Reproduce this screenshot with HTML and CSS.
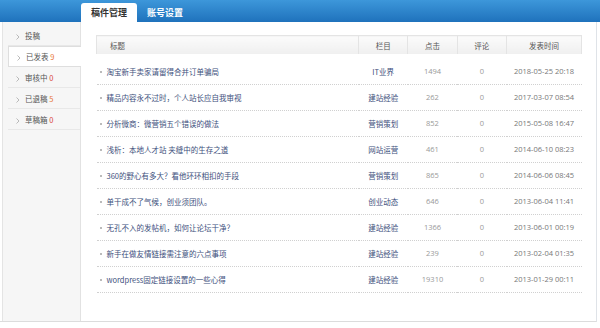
FILE: index.html
```html
<!DOCTYPE html>
<html lang="zh-CN">
<head>
  <meta charset="UTF-8">
  <title>稿件管理</title>
  <link rel="stylesheet" href="styles.css">
</head>
<body>

  <div class="topbar">
    <a class="tab active" href="#">稿件管理</a>
    <a class="tab" href="#">账号设置</a>
  </div>

  <div class="wrap">
    <ul class="side">
      <li><svg class="arr" width="4" height="6" viewBox="0 0 4 6"><path d="M0.5 0.5 L3 3 L0.5 5.5" fill="none" stroke="#aaa" stroke-width="0.8"/></svg>投稿</li>
      <li class="on"><svg class="arr" width="4" height="6" viewBox="0 0 4 6"><path d="M0.5 0.5 L3 3 L0.5 5.5" fill="none" stroke="#aaa" stroke-width="0.8"/></svg>已发表 <em>9</em></li>
      <li><svg class="arr" width="4" height="6" viewBox="0 0 4 6"><path d="M0.5 0.5 L3 3 L0.5 5.5" fill="none" stroke="#aaa" stroke-width="0.8"/></svg>审核中 <em class="red">0</em></li>
      <li><svg class="arr" width="4" height="6" viewBox="0 0 4 6"><path d="M0.5 0.5 L3 3 L0.5 5.5" fill="none" stroke="#aaa" stroke-width="0.8"/></svg>已退稿 <em>5</em></li>
      <li><svg class="arr" width="4" height="6" viewBox="0 0 4 6"><path d="M0.5 0.5 L3 3 L0.5 5.5" fill="none" stroke="#aaa" stroke-width="0.8"/></svg>草稿箱 <em class="red">0</em></li>
    </ul>

    <div class="main">
      <table class="list">
        <thead>
          <tr>
            <th class="t">标题</th>
            <th>栏目</th>
            <th>点击</th>
            <th>评论</th>
            <th class="last">发表时间</th>
          </tr>
        </thead>
        <tbody>
          <tr><td class="t"><i></i><a href="#">淘宝新手卖家请留得合并订单骗局</a></td><td class="cat">IT业界</td><td>1494</td><td>0</td><td class="d">2018-05-25 20:18</td></tr>
          <tr><td class="t"><i></i><a href="#">精品内容永不过时，个人站长应自我审视</a></td><td class="cat">建站经验</td><td>262</td><td>0</td><td class="d">2017-03-07 08:54</td></tr>
          <tr><td class="t"><i></i><a href="#">分析微商：微营销五个错误的做法</a></td><td class="cat">营销策划</td><td>852</td><td>0</td><td class="d">2015-05-08 16:47</td></tr>
          <tr><td class="t"><i></i><a href="#">浅析：本地人才站 夹缝中的生存之道</a></td><td class="cat">网站运营</td><td>461</td><td>0</td><td class="d">2014-06-10 08:23</td></tr>
          <tr><td class="t"><i></i><a href="#">360的野心有多大？看他环环相扣的手段</a></td><td class="cat">营销策划</td><td>865</td><td>0</td><td class="d">2014-06-06 08:45</td></tr>
          <tr><td class="t"><i></i><a href="#">单干成不了气候，创业须团队。</a></td><td class="cat">创业动态</td><td>646</td><td>0</td><td class="d">2013-06-04 11:41</td></tr>
          <tr><td class="t"><i></i><a href="#">无孔不入的发帖机，如何让论坛干净？</a></td><td class="cat">建站经验</td><td>1366</td><td>0</td><td class="d">2013-06-01 00:19</td></tr>
          <tr><td class="t"><i></i><a href="#">新手在做友情链接需注意的六点事项</a></td><td class="cat">建站经验</td><td>239</td><td>0</td><td class="d">2013-02-04 01:35</td></tr>
          <tr><td class="t"><i></i><a href="#">wordpress固定链接设置的一些心得</a></td><td class="cat">建站经验</td><td>19310</td><td>0</td><td class="d">2013-01-29 00:11</td></tr>
        </tbody>
      </table>
    </div>
  </div>

</body>
</html>
```

FILE: styles.css
```css
body {
  margin: 0;
  padding: 0;
  background: #fff;
  font-family: 'Open Sans', 'Noto Sans CJK SC', sans-serif;
  font-size: 7.5px;
  color: #666;
}

a {
  text-decoration: none;
}

.topbar {
  height: 22px;
  background: linear-gradient(to bottom, #3d97da, #1f72bc);
  display: flex;
  align-items: flex-end;
  padding-left: 81px;
}

.tab {
  display: block;
  height: 19px;
  line-height: 19px;
  padding: 0 10px;
  font-size: 9px;
  font-weight: bold;
  color: #fff;
  font-family: 'Noto Sans CJK SC', sans-serif;
}

.tab.active {
  background: #fff;
  color: #333;
  border-radius: 3px 3px 0 0;
}

.wrap {
  display: flex;
  width: 596px;
  height: 299px;
  border-right: 1px solid #dfe3e8;
  border-bottom: 1px solid #dcdcdc;
}

.side {
  list-style: none;
  margin: 0 0 0 2px;
  padding: 3px 0 0 5px;
  width: 72px;
  background: #f6f6f6;
  border-left: 1px solid #e4e4e4;
  border-right: 1px solid #e2e2e2;
}

.side li {
  height: 21px;
  line-height: 21px;
  border-bottom: 1px solid #e8e8e8;
  color: #555;
  font-family: 'Noto Sans CJK SC', sans-serif;
  box-sizing: border-box;
}

.side li.on {
  background: #fff;
  border: 1px solid #dedede;
  border-right: none;
  margin-right: -1px;
  line-height: 19px;
}

.side .arr {
  margin: 0 5px 0 8px;
  vertical-align: -0.5px;
}

.side em {
  font-style: normal;
  color: #e8773a;
}

.side em.red {
  color: #d9463a;
}

.main {
  flex: 1;
  padding: 13px 0 0 15px;
}

.list {
  width: 486px;
  border-collapse: collapse;
  table-layout: fixed;
}

.list th {
  height: 18px;
  padding: 0;
  font-weight: normal;
  color: #555;
  background: linear-gradient(to bottom, #fbfbfb, #efefef);
  border-top: 1px solid #e4e4e4;
  border-bottom: 1px solid #dcdcdc;
  border-left: 1px solid #e4e4e4;
  text-align: center;
  font-family: 'Noto Sans CJK SC', sans-serif;
}

.list th.t {
  text-align: left;
  padding-left: 13px;
  width: 248px;
}

.list th.last {
  width: 74px;
  border-right: 1px solid #e4e4e4;
}

.list tbody tr:first-child td {
  border-top: 5px solid #fff;
}

.list td {
  height: 25px;
  padding: 0;
  line-height: 11px;
  text-align: center;
  border-bottom: 1px dotted #d0d0d0;
  color: #999;
}

.list td.t {
  text-align: left;
  padding-left: 3px;
  white-space: nowrap;
}

.list td.t i {
  display: inline-block;
  width: 2px;
  height: 2px;
  background: #bbb;
  vertical-align: 2px;
  margin-right: 5px;
}

.list td a,
.list td.cat {
  color: #3d4f7c;
  font-family: 'Noto Sans CJK SC', sans-serif;
}

.list td.d {
  color: #777;
}
```
